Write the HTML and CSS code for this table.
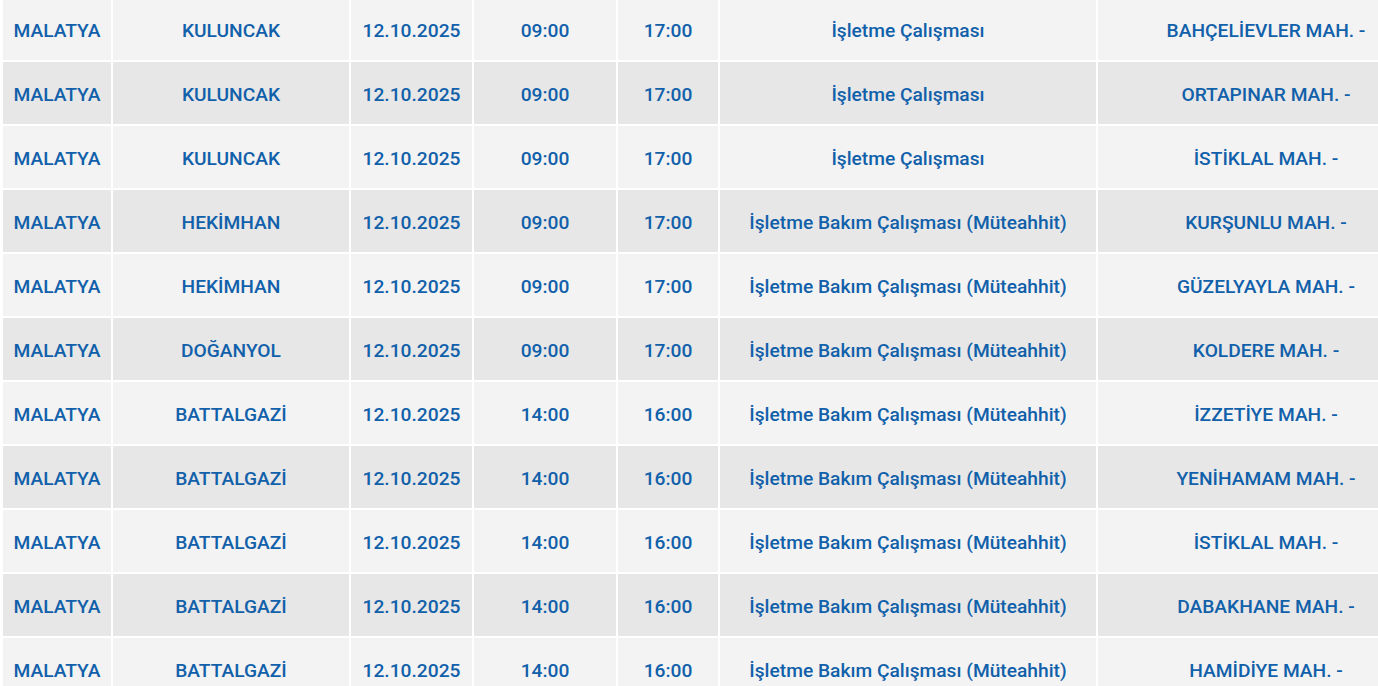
FILE: index.html
```html
<!DOCTYPE html>
<html lang="tr">
<head>
<meta charset="utf-8">
<link rel="stylesheet" href="styles.css">
</head>
<body>
<div class="wrap">
<table class="outages">
<colgroup>
<col class="c-il"><col class="c-ilce"><col class="c-tarih"><col class="c-bas"><col class="c-bit"><col class="c-neden"><col class="c-yer">
</colgroup>
<tbody>
<tr><td>MALATYA</td><td>KULUNCAK</td><td>12.10.2025</td><td>09:00</td><td>17:00</td><td>İşletme Çalışması</td><td>BAHÇELİEVLER MAH. -</td></tr>
<tr><td>MALATYA</td><td>KULUNCAK</td><td>12.10.2025</td><td>09:00</td><td>17:00</td><td>İşletme Çalışması</td><td>ORTAPINAR MAH. -</td></tr>
<tr><td>MALATYA</td><td>KULUNCAK</td><td>12.10.2025</td><td>09:00</td><td>17:00</td><td>İşletme Çalışması</td><td>İSTİKLAL MAH. -</td></tr>
<tr><td>MALATYA</td><td>HEKİMHAN</td><td>12.10.2025</td><td>09:00</td><td>17:00</td><td>İşletme Bakım Çalışması (Müteahhit)</td><td>KURŞUNLU MAH. -</td></tr>
<tr><td>MALATYA</td><td>HEKİMHAN</td><td>12.10.2025</td><td>09:00</td><td>17:00</td><td>İşletme Bakım Çalışması (Müteahhit)</td><td>GÜZELYAYLA MAH. -</td></tr>
<tr><td>MALATYA</td><td>DOĞANYOL</td><td>12.10.2025</td><td>09:00</td><td>17:00</td><td>İşletme Bakım Çalışması (Müteahhit)</td><td>KOLDERE MAH. -</td></tr>
<tr><td>MALATYA</td><td>BATTALGAZİ</td><td>12.10.2025</td><td>14:00</td><td>16:00</td><td>İşletme Bakım Çalışması (Müteahhit)</td><td>İZZETİYE MAH. -</td></tr>
<tr><td>MALATYA</td><td>BATTALGAZİ</td><td>12.10.2025</td><td>14:00</td><td>16:00</td><td>İşletme Bakım Çalışması (Müteahhit)</td><td>YENİHAMAM MAH. -</td></tr>
<tr><td>MALATYA</td><td>BATTALGAZİ</td><td>12.10.2025</td><td>14:00</td><td>16:00</td><td>İşletme Bakım Çalışması (Müteahhit)</td><td>İSTİKLAL MAH. -</td></tr>
<tr><td>MALATYA</td><td>BATTALGAZİ</td><td>12.10.2025</td><td>14:00</td><td>16:00</td><td>İşletme Bakım Çalışması (Müteahhit)</td><td>DABAKHANE MAH. -</td></tr>
<tr><td>MALATYA</td><td>BATTALGAZİ</td><td>12.10.2025</td><td>14:00</td><td>16:00</td><td>İşletme Bakım Çalışması (Müteahhit)</td><td>HAMİDİYE MAH. -</td></tr>
</tbody>
</table>
</div>
</body>
</html>
```

FILE: styles.css
```css
html, body {
  margin: 0;
  padding: 0;
  background: #ffffff;
  overflow: hidden;
}
.wrap {
  width: 1378px;
  height: 686px;
  overflow: hidden;
}
.outages {
  margin-top: -4px;
  margin-left: 1px;
  border-collapse: separate;
  border-spacing: 2px;
  table-layout: fixed;
  width: 1435px;
  font-family: Roboto, "Liberation Sans", sans-serif;
  font-weight: 500;
  font-size: 19.2px;
  color: #1160aa;
}
.c-il { width: 108px; }
.c-ilce { width: 236px; }
.c-tarih { width: 121px; }
.c-bas { width: 142px; }
.c-bit { width: 100px; }
.c-neden { width: 376px; }
.c-yer { width: 336px; }
.outages td {
  box-sizing: border-box;
  height: 62px;
  padding: 2px 0 0 0;
  text-align: center;
  vertical-align: middle;
  white-space: nowrap;
  background: #f3f3f3;
}
.outages tr:nth-child(even) td {
  background: #e7e7e7;
}
```
